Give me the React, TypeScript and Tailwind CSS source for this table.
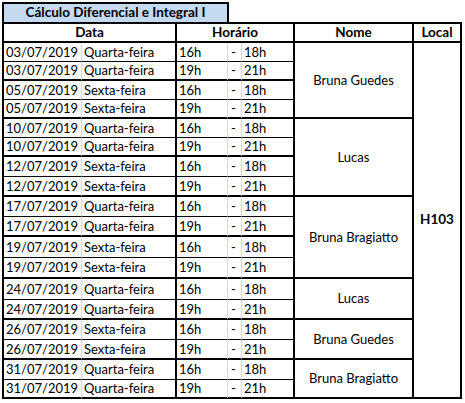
import React from "react";

const rows: [string, string, string, string][] = [
  ["03/07/2019", "Quarta-feira", "16h", "18h"],
  ["03/07/2019", "Quarta-feira", "19h", "21h"],
  ["05/07/2019", "Sexta-feira", "16h", "18h"],
  ["05/07/2019", "Sexta-feira", "19h", "21h"],
  ["10/07/2019", "Quarta-feira", "16h", "18h"],
  ["10/07/2019", "Quarta-feira", "19h", "21h"],
  ["12/07/2019", "Sexta-feira", "16h", "18h"],
  ["12/07/2019", "Sexta-feira", "19h", "21h"],
  ["17/07/2019", "Quarta-feira", "16h", "18h"],
  ["17/07/2019", "Quarta-feira", "19h", "21h"],
  ["19/07/2019", "Sexta-feira", "16h", "18h"],
  ["19/07/2019", "Sexta-feira", "19h", "21h"],
  ["24/07/2019", "Quarta-feira", "16h", "18h"],
  ["24/07/2019", "Quarta-feira", "19h", "21h"],
  ["26/07/2019", "Sexta-feira", "16h", "18h"],
  ["26/07/2019", "Sexta-feira", "19h", "21h"],
  ["31/07/2019", "Quarta-feira", "16h", "18h"],
  ["31/07/2019", "Quarta-feira", "19h", "21h"],
];

const names: [string, number, number][] = [
  ["Bruna Guedes", 1, 4],
  ["Lucas", 5, 8],
  ["Bruna Bragiatto", 9, 12],
  ["Lucas", 13, 14],
  ["Bruna Guedes", 15, 16],
  ["Bruna Bragiatto", 17, 18],
];

export default function App() {
  return (
    <div className="bg-white w-[465px] h-[403px] overflow-hidden pl-[2px] pt-[2px] font-['Lato',sans-serif] text-[13px] text-black leading-none">
      <div className="w-[227px] h-[20px] border-t-2 border-x-2 border-black bg-[#c5d9f1] flex items-center justify-center font-bold text-[13.5px]">
        Cálculo Diferencial e Integral I
      </div>
      <div className="grid w-[460px] grid-cols-[78px_95px_51px_14px_53px_119px_48px] grid-rows-[19px_19px_19px_19px_19px_19px_19px_20px_20px_20px_20px_21px_21px_21px_20px_20px_20px_20px_19px] border-t-2 border-l-2 border-black">
        <div className="col-span-2 border-r-2 border-b-2 border-black flex items-center justify-center font-bold text-[13.5px]">Data</div>
        <div className="col-span-3 border-r-2 border-b-2 border-black flex items-center justify-center font-bold text-[13.5px]">Horário</div>
        <div className="border-r-2 border-b-2 border-black flex items-center justify-center font-bold text-[13.5px]">Nome</div>
        <div className="border-r-2 border-b-2 border-black flex items-center justify-center font-bold text-[13.5px]">Local</div>
        {rows.map((r, i) => {
          const even = i % 2 === 1;
          const bb = even ? "border-b-2 border-b-black" : "border-b border-b-black";
          const gr = { gridRow: i + 2 };
          return (
            <React.Fragment key={i}>
              <div style={{ ...gr, gridColumn: 1 }} className={`${bb} border-r border-r-[#d9d9d9] flex items-center pl-[2px]`}>{r[0]}</div>
              <div style={{ ...gr, gridColumn: 2 }} className={`${bb} border-r-2 border-r-black flex items-center pl-[2px]`}>{r[1]}</div>
              <div style={{ ...gr, gridColumn: 3 }} className={`${bb} border-r border-r-[#d9d9d9] flex items-center pl-[2px]`}>{r[2]}</div>
              <div style={{ ...gr, gridColumn: 4 }} className={`${bb} border-r border-r-[#d9d9d9] flex items-center pl-[3px]`}>-</div>
              <div style={{ ...gr, gridColumn: 5 }} className={`${bb} border-r-2 border-r-black flex items-center pl-[2px]`}>{r[3]}</div>
            </React.Fragment>
          );
        })}
        {names.map(([n, a, b], i) => (
          <div
            key={i}
            style={{ gridRow: `${a + 1} / ${b + 2}`, gridColumn: 6 }}
            className="border-r-2 border-b-2 border-black flex items-center justify-center"
          >
            {n}
          </div>
        ))}
        <div style={{ gridRow: "2 / 20", gridColumn: 7 }} className="border-r-2 border-b-2 border-black flex items-center justify-center font-bold text-[13.5px]">
          H103
        </div>
      </div>
    </div>
  );
}
